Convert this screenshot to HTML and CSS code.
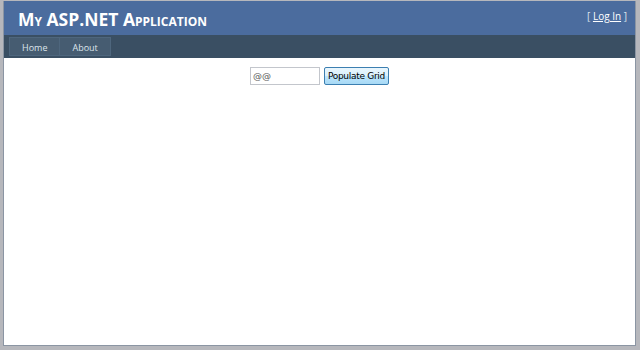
FILE: index.html
```html
<!DOCTYPE html>
<html lang="en">
<head>
  <meta charset="UTF-8" />
  <title>Home Page</title>
  <link rel="stylesheet" href="styles.css">
</head>
<body>
  <div class="page">
    <div class="header">
      <div class="title">
        <h1>My ASP.NET Application</h1>
      </div>
      <div class="loginDisplay">
        [ <a href="#">Log In</a> ]
      </div>
    </div>
    <div class="menu">
      <a href="#">Home</a><a href="#">About</a>
    </div>
    <div class="main">
      <input type="text" class="textEntry" value="@@" />
      <button class="populate">Populate Grid</button>
    </div>
  </div>
</body>
</html>
```

FILE: styles.css
```css
body {
  margin: 0;
  background: #b6b7bc;
  font-family: "Open Sans", "DejaVu Sans", sans-serif;
  font-size: 11px;
  color: #696969;
}

.page {
  margin: 1px 4px 3px 3px;
  height: 344px;
  background: #fff;
  border: 1px solid #8b95a3;
  border-top: none;
  display: flex;
  flex-direction: column;
}

.header {
  background: #4b6c9e;
  height: 34px;
  display: flex;
  justify-content: space-between;
}

.title h1 {
  margin: 0;
  padding: 6px 0 0 14px;
  font-size: 17.5px;
  font-weight: bold;
  font-variant: small-caps;
  color: #fff;
}

.loginDisplay {
  padding: 8px 8px 0 0;
  color: #dde4ec;
  font-size: 10px;
}

.loginDisplay a {
  color: #fff;
}

.menu {
  background: #3a4f63;
  height: 23px;
  padding: 2px 0 0 5px;
  box-sizing: border-box;
  display: flex;
}

.menu a {
  display: block;
  height: 19px;
  box-sizing: border-box;
  padding: 3px 12px 0;
  background: #465c71;
  border: 1px solid #4e667d;
  color: #dde4ec;
  font-size: 9px;
  text-decoration: none;
}

.menu a + a {
  border-left: none;
}

.main {
  padding: 9px 0 0;
  text-align: center;
}

.textEntry {
  width: 70px;
  height: 18px;
  box-sizing: border-box;
  border: 1px solid #c3c6cc;
  padding: 0 2px;
  font-family: "DejaVu Sans", sans-serif;
  font-size: 9px;
  color: #555;
  vertical-align: top;
}

.populate {
  width: 65px;
  height: 18px;
  margin-left: 1px;
  padding: 0;
  border: 1px solid #3c7fb1;
  border-radius: 2px;
  background: linear-gradient(#eaf6fd, #d9f0fc 50%, #bee6fd 50%, #a7d9f5);
  font-family: "DejaVu Sans", sans-serif;
  font-size: 9px;
  letter-spacing: -0.3px;
  color: #000;
  vertical-align: top;
}
```
